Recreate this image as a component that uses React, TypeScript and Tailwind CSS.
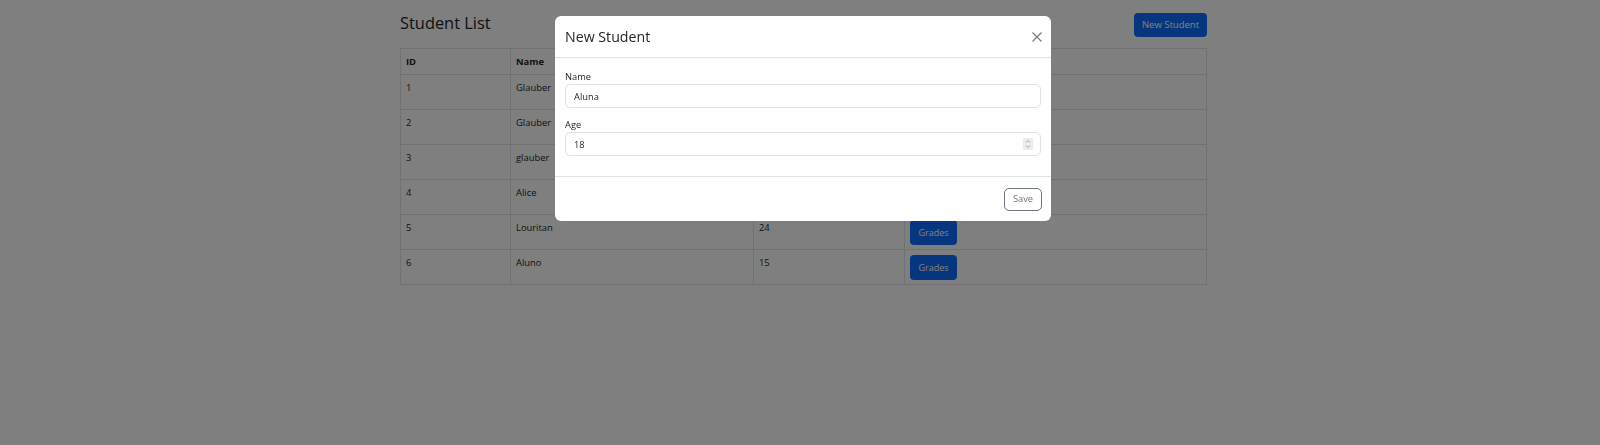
import React from "react";

const rows = [
  { id: 1, name: "Glauber", age: 30 },
  { id: 2, name: "Glauber", age: 30 },
  { id: 3, name: "glauber", age: 30 },
  { id: 4, name: "Alice", age: 20 },
  { id: 5, name: "Louritan", age: 24 },
  { id: 6, name: "Aluno", age: 15 },
];

export default function App() {
  return (
    <div className="relative h-[445px] w-full overflow-hidden bg-white font-['Open_Sans',sans-serif] text-[#212529]">
      <div className="ml-[400px] w-[807px] pt-[11px]">
        <div className="flex items-start justify-between">
          <h2 className="text-[16.4px] font-normal leading-[24px]">Student List</h2>
          <button className="mt-[2px] flex h-[24px] w-[73px] items-center justify-center rounded-[4px] bg-[#0d6efd] text-[9.5px] text-white">
            New Student
          </button>
        </div>
        <div className="mt-[11px] grid grid-cols-[110px_243px_151px_302px] border-l border-t border-[#dee2e6] text-[9.4px] leading-[16px]">
          {["ID", "Name", "Age", "Actions"].map((h) => (
            <div key={h} className="h-[26px] border-b border-r border-[#dee2e6] px-[5px] pt-[5px] font-bold">
              {h}
            </div>
          ))}
          {rows.map((r) => (
            <React.Fragment key={r.id}>
              <div className="h-[35px] border-b border-r border-[#dee2e6] px-[5px] pt-[5px]">{r.id}</div>
              <div className="h-[35px] border-b border-r border-[#dee2e6] px-[5px] pt-[5px]">{r.name}</div>
              <div className="h-[35px] border-b border-r border-[#dee2e6] px-[5px] pt-[5px]">{r.age}</div>
              <div className="h-[35px] border-b border-r border-[#dee2e6] px-[5px] pt-[5px]">
                <button className="flex h-[25px] w-[47px] items-center justify-center rounded-[4px] bg-[#0d6efd] text-[9px] text-white">
                  Grades
                </button>
              </div>
            </React.Fragment>
          ))}
        </div>
      </div>

      <div className="fixed inset-0 z-10 bg-black/50">
        <div className="absolute left-[555px] top-[16px] w-[496px] rounded-[6px] bg-white">
          <div className="flex h-[42px] items-center justify-between border-b border-[#dee2e6] pl-[10px] pr-[9px]">
            <h5 className="text-[14.2px] font-normal leading-[20px] text-[#212529]">New Student</h5>
            <svg width="10" height="10" viewBox="0 0 10 10" className="block">
              <path d="M0.5 0.5 L9.5 9.5 M9.5 0.5 L0.5 9.5" stroke="#7a7a7a" strokeWidth="1.2" fill="none" />
            </svg>
          </div>
          <div className="px-[10px] pb-[20px] pt-[12px] text-[9.3px]">
            <label className="block leading-[14px]">Name</label>
            <input
              readOnly
              value="Aluna"
              className="block h-[24px] w-full rounded-[5px] border border-[#dee2e6] px-[8px] text-[9.3px] text-[#212529] outline-none"
            />
            <label className="mt-[10px] block leading-[14px]">Age</label>
            <div className="relative">
              <input
                readOnly
                value="18"
                className="block h-[24px] w-full rounded-[5px] border border-[#dee2e6] px-[8px] text-[9.3px] text-[#212529] outline-none"
              />
              <svg width="10" height="12" viewBox="0 0 10 12" className="absolute right-[8px] top-[6px]">
                <rect x="0" y="0" width="10" height="12" rx="1" fill="#ececec" />
                <path d="M3 4.5 L5 2.5 L7 4.5" stroke="#9a9a9a" strokeWidth="0.9" fill="none" />
                <path d="M3 7.5 L5 9.5 L7 7.5" stroke="#9a9a9a" strokeWidth="0.9" fill="none" />
              </svg>
            </div>
          </div>
          <div className="flex h-[45px] items-center justify-end border-t border-[#dee2e6] pr-[9px]">
            <button className="flex h-[23px] w-[38px] items-center justify-center rounded-[5px] border border-[#6c757d] text-[9.3px] text-[#6c757d]">
              Save
            </button>
          </div>
        </div>
      </div>
    </div>
  );
}
